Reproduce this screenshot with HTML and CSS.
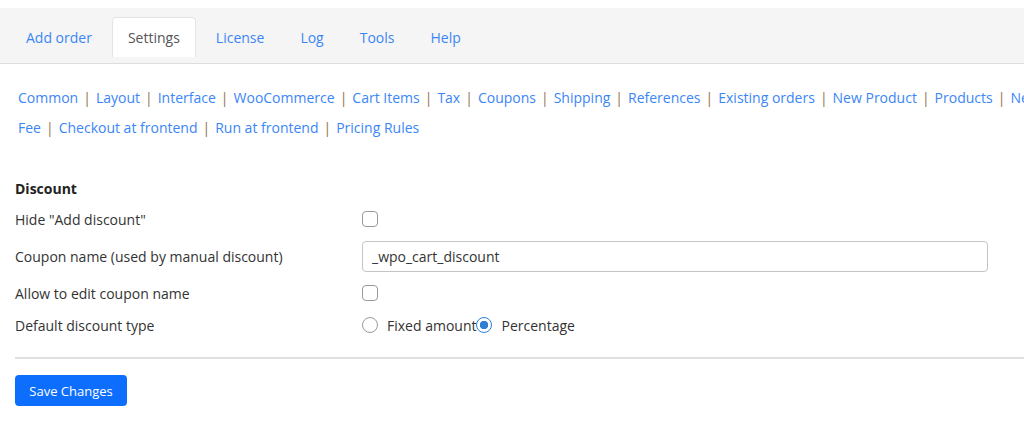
FILE: index.html
```html
<!DOCTYPE html>
<html lang="en">

<head>
    <meta charset="UTF-8">
    <meta name="viewport" content="width=device-width, initial-scale=1.0">
    <title>Phone Orders - Settings</title>
    <link rel="stylesheet" href="styles.css">
</head>

<body>
    <div class="page">
        <nav class="tabs">
            <a class="tab" href="#">Add order</a>
            <a class="tab active" href="#">Settings</a>
            <a class="tab" href="#">License</a>
            <a class="tab" href="#">Log</a>
            <a class="tab" href="#">Tools</a>
            <a class="tab" href="#">Help</a>
        </nav>

        <div class="sections">
            <a href="#">Common</a><span class="sep">|</span>
            <a href="#">Layout</a><span class="sep">|</span>
            <a href="#">Interface</a><span class="sep">|</span>
            <a href="#">WooCommerce</a><span class="sep">|</span>
            <a href="#">Cart Items</a><span class="sep">|</span>
            <a href="#">Tax</a><span class="sep">|</span>
            <a href="#">Coupons</a><span class="sep">|</span>
            <a href="#">Shipping</a><span class="sep">|</span>
            <a href="#">References</a><span class="sep">|</span>
            <a href="#">Existing orders</a><span class="sep">|</span>
            <a href="#">New Product</a><span class="sep">|</span>
            <a href="#">Products</a><span class="sep">|</span>
            <a href="#">New customer</a><span class="sep">|</span>
            <a href="#">Fee</a><span class="sep">|</span>
            <a href="#">Checkout at frontend</a><span class="sep">|</span>
            <a href="#">Run at frontend</a><span class="sep">|</span>
            <a href="#">Pricing Rules</a>
        </div>

        <form class="settings">
            <h3 class="section-title">Discount</h3>
            <div class="form-table">
                <label class="label">Hide "Add discount"</label>
                <div class="field"><input type="checkbox" class="check"></div>

                <label class="label">Coupon name (used by manual discount)</label>
                <div class="field"><input type="text" class="text-input" value="_wpo_cart_discount"></div>

                <label class="label">Allow to edit coupon name</label>
                <div class="field"><input type="checkbox" class="check"></div>

                <label class="label">Default discount type</label>
                <div class="field">
                    <label class="radio"><input type="radio" name="type"><span>Fixed amount</span></label>
                    <label class="radio"><input type="radio" name="type" checked><span>Percentage</span></label>
                </div>
            </div>

            <hr class="divider">

            <button type="button" class="btn-save">Save Changes</button>
        </form>
    </div>
</body>

</html>
```

FILE: styles.css
```css
body {
    margin: 0;
    padding: 0;
    overflow: hidden;
    background: #fff;
    font-family: 'Open Sans', 'Noto Sans', sans-serif;
    font-size: 14px;
    color: #333;
}

.page {
    width: 1125px;
    padding-top: 8px;
}

/* top tabs */
.tabs {
    display: flex;
    align-items: flex-end;
    gap: 4px;
    height: 40px;
    padding: 9px 0 6px 10px;
    background: #f5f5f5;
    border-bottom: 1px solid #dedede;
}

.tab {
    display: flex;
    align-items: center;
    height: 40px;
    padding: 0 15px;
    box-sizing: border-box;
    color: #3b86f7;
    text-decoration: none;
    font-size: 14px;
    border: 1px solid transparent;
    border-bottom: none;
    border-radius: 4px 4px 0 0;
}

.tab.active {
    background: #fff;
    color: #555;
    border-color: #e4e4e4;
}

/* section links */
.sections {
    display: flex;
    flex-wrap: wrap;
    margin-top: 19px;
    padding-left: 18px;
    line-height: 30px;
    font-size: 14px;
}

.sections a {
    color: #3b86f7;
    text-decoration: none;
}

.sep {
    color: #94704e;
    margin: 0 5px;
}

/* form */
.settings {
    padding-left: 15px;
}

.section-title {
    margin: 36px 0 3px;
    font-size: 14px;
    line-height: 20px;
    font-weight: 700;
    color: #222;
}

.form-table {
    display: grid;
    grid-template-columns: 347px 626px;
    grid-template-rows: 34px 40px 34px 30px;
    align-items: center;
}

.label {
    font-size: 14px;
    color: #333;
}

.field {
    display: flex;
    align-items: center;
}

.check {
    appearance: none;
    width: 16px;
    height: 16px;
    margin: 0;
    border: 1px solid #9a9a9a;
    border-radius: 4px;
    background: #fff;
}

.text-input {
    width: 100%;
    height: 31px;
    box-sizing: border-box;
    padding: 0 9px;
    border: 1px solid #c4c4c4;
    border-radius: 4px;
    font-family: inherit;
    font-size: 14px;
    color: #333;
}

.radio {
    display: flex;
    align-items: center;
}

.radio input {
    appearance: none;
    width: 16px;
    height: 16px;
    margin: 0 9px 0 0;
    border: 1px solid #9a9a9a;
    border-radius: 50%;
    background: #fff;
}

.radio input:checked {
    border-color: #2f7fd9;
    background: radial-gradient(circle, #2f7fd9 0 4px, #fff 4.5px);
}

.radio span {
    color: #333;
}

.divider {
    margin: 17px 0 0;
    border: none;
    border-top: 2px solid #e0e0e0;
}

.btn-save {
    margin-top: 16px;
    width: 112px;
    height: 31px;
    border: none;
    border-radius: 4px;
    background: #0d6efd;
    color: #fff;
    font-family: inherit;
    font-size: 13px;
}
```
